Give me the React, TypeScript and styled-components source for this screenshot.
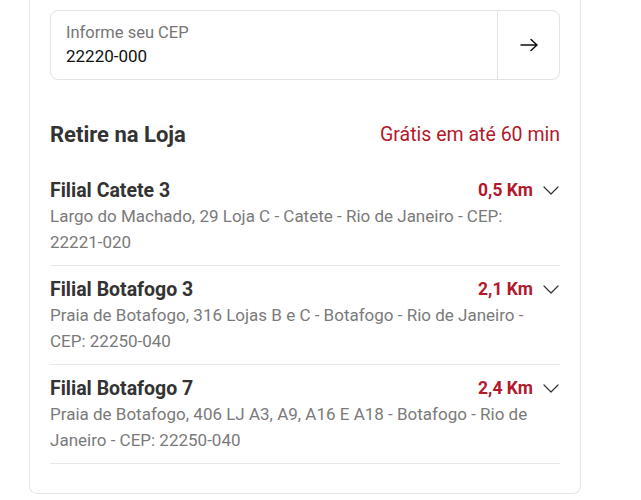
import React from 'react';
import styled, { createGlobalStyle } from 'styled-components';

const GlobalStyle = createGlobalStyle`
  body {
    margin: 0;
    background: #fff;
    font-family: Roboto, "Liberation Sans", Arial, sans-serif;
  }
`;

const Page = styled.div`
  padding-left: 29px;
  width: 552px;
`;

const Card = styled.div`
  border: 1px solid #e6e6e6;
  border-top: none;
  border-radius: 0 0 8px 8px;
  padding: 10px 20px 29px;
`;

const CepBox = styled.div`
  display: flex;
  height: 70px;
  box-sizing: border-box;
  border: 1px solid #e3e3e3;
  border-radius: 8px;
`;

const CepField = styled.div`
  flex: 1;
  display: flex;
  flex-direction: column;
  justify-content: center;
  padding: 0 15px;
  gap: 3px;
`;

const CepLabel = styled.div`
  font-size: 16.5px;
  line-height: 20px;
  color: #757575;
`;

const CepValue = styled.div`
  font-size: 17px;
  line-height: 21px;
  color: #111;
`;

const CepButton = styled.button`
  width: 62px;
  border: none;
  border-left: 1px solid #e3e3e3;
  background: transparent;
  display: flex;
  align-items: center;
  justify-content: center;
  color: #111;
  padding: 0;
`;

const Header = styled.div`
  display: flex;
  justify-content: space-between;
  align-items: center;
  margin-top: 40px;
  margin-bottom: 31px;
  height: 28px;
`;

const Title = styled.h2`
  margin: 0;
  font-size: 22px;
  font-weight: 700;
  color: #333;
`;

const Promo = styled.span`
  font-size: 19.5px;
  color: #b3182b;
`;

const StoreList = styled.div`
  display: flex;
  flex-direction: column;
`;

const Store = styled.div<{ $first?: boolean }>`
  padding: ${(p) => (p.$first ? '0' : '12px')} 0 10px;
  border-bottom: 1px solid #e8e8e8;
`;

const StoreTop = styled.div`
  display: flex;
  align-items: center;
  justify-content: space-between;
  height: 22px;
`;

const StoreName = styled.span`
  font-size: 19.5px;
  font-weight: 700;
  color: #333;
`;

const Distance = styled.span`
  display: flex;
  align-items: center;
  gap: 10px;
  font-size: 17.5px;
  font-weight: 700;
  color: #b3182b;
`;

const Chevron = styled.svg`
  width: 16px;
  height: 9px;
  color: #333;
  margin-right: 1px;
`;

const Address = styled.div`
  margin-top: 2px;
  font-size: 17px;
  line-height: 26px;
  color: #7a7a7a;
  padding-right: 10px;
`;

const Arrow = styled.svg`
  width: 20px;
  height: 14px;
`;

const stores = [
  {
    name: 'Filial Catete 3',
    distance: '0,5 Km',
    address: 'Largo do Machado, 29 Loja C - Catete - Rio de Janeiro - CEP: 22221-020',
  },
  {
    name: 'Filial Botafogo 3',
    distance: '2,1 Km',
    address: 'Praia de Botafogo, 316 Lojas B e C - Botafogo - Rio de Janeiro - CEP: 22250-040',
  },
  {
    name: 'Filial Botafogo 7',
    distance: '2,4 Km',
    address: 'Praia de Botafogo, 406 LJ A3, A9, A16 E A18 - Botafogo - Rio de Janeiro - CEP: 22250-040',
  },
];

export default function App() {
  return (
    <Page>
      <GlobalStyle />
      <Card>
        <CepBox>
          <CepField>
            <CepLabel>Informe seu CEP</CepLabel>
            <CepValue>22220-000</CepValue>
          </CepField>
          <CepButton type="button">
            <Arrow viewBox="0 0 20 14" fill="none" stroke="currentColor" strokeWidth="1.5" strokeLinecap="round" strokeLinejoin="round">
              <path d="M2 7h16M12 1.5 18 7l-6 5.5" />
            </Arrow>
          </CepButton>
        </CepBox>
        <Header>
          <Title>Retire na Loja</Title>
          <Promo>Grátis em até 60 min</Promo>
        </Header>
        <StoreList>
          {stores.map((s, i) => (
            <Store key={s.name} $first={i === 0}>
              <StoreTop>
                <StoreName>{s.name}</StoreName>
                <Distance>
                  {s.distance}
                  <Chevron viewBox="0 0 16 9" fill="none" stroke="currentColor" strokeWidth="1.2" strokeLinecap="round" strokeLinejoin="round">
                    <path d="M1 1l7 7 7-7" />
                  </Chevron>
                </Distance>
              </StoreTop>
              <Address>{s.address}</Address>
            </Store>
          ))}
        </StoreList>
      </Card>
    </Page>
  );
}
